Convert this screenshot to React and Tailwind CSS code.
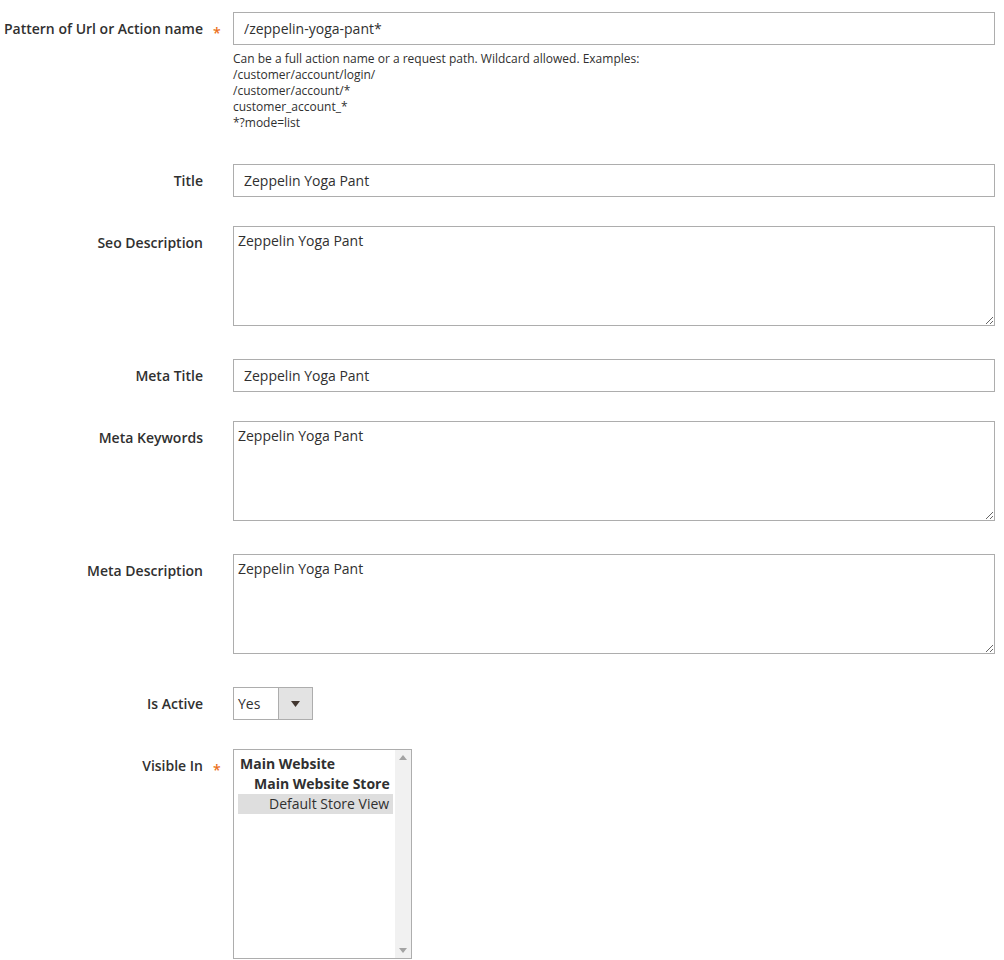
import React from "react";

const Star = () => (
  <span className="pl-[10px] text-[#eb6f1a] text-[14px] leading-[20px] font-semibold">*</span>
);

const Row = ({ label, required, className, children }) => (
  <div className={`flex ${className}`}>
    <div className="w-[203px] shrink-0 text-right pt-[7px] text-[14px] leading-[20px] font-semibold text-[#303030]">
      {label}
    </div>
    <div className="w-[30px] shrink-0 pt-[8px]">{required && <Star />}</div>
    <div className="flex-1">{children}</div>
  </div>
);

const inputCls =
  "block w-full h-[33px] border border-[#adadad] bg-white px-[10px] text-[14px] text-[#303030] outline-none";

const areaCls =
  "block w-full h-[100px] border border-[#adadad] bg-white px-[4px] pt-[4px] text-[14px] leading-[20px] text-[#303030] outline-none";

const App = () => {
  return (
    <div className="bg-white min-h-[960px] pt-[12px] pr-[9px] font-['Open_Sans',sans-serif] text-[#303030]">

      {/* PATTERN */}
      <Row label="Pattern of Url or Action name" required>
        <input className={inputCls} defaultValue="/zeppelin-yoga-pant*" />
        <div className="mt-[6px] text-[12px] leading-[16px]">
          <div>Can be a full action name or a request path. Wildcard allowed. Examples:</div>
          <div>/customer/account/login/</div>
          <div>/customer/account/*</div>
          <div>customer_account_*</div>
          <div>*?mode=list</div>
        </div>
      </Row>

      <Row label="Title" className="mt-[33px]">
        <input className={inputCls} defaultValue="Zeppelin Yoga Pant" />
      </Row>

      <Row label="Seo Description" className="mt-[29px]">
        <textarea className={areaCls} defaultValue="Zeppelin Yoga Pant" />
      </Row>

      <Row label="Meta Title" className="mt-[33px]">
        <input className={inputCls} defaultValue="Zeppelin Yoga Pant" />
      </Row>

      <Row label="Meta Keywords" className="mt-[29px]">
        <textarea className={areaCls} defaultValue="Zeppelin Yoga Pant" />
      </Row>

      <Row label="Meta Description" className="mt-[33px]">
        <textarea className={areaCls} defaultValue="Zeppelin Yoga Pant" />
      </Row>

      {/* SELECT */}
      <Row label="Is Active" className="mt-[33px]">
        <div className="flex w-[80px] h-[33px] border border-[#adadad] bg-white">
          <div className="flex-1 pl-[4px] text-[14px] leading-[31px]">Yes</div>
          <div className="w-[34px] border-l border-[#adadad] bg-[#e3e3e3] flex items-center justify-center">
            <svg width="9" height="6" viewBox="0 0 9 6">
              <path d="M0 0 H9 L4.5 6 Z" fill="#41362f" />
            </svg>
          </div>
        </div>
      </Row>

      {/* MULTISELECT */}
      <Row label="Visible In" required className="mt-[29px]">
        <div className="flex w-[179px] h-[210px] border border-[#adadad] bg-white">
          <div className="flex-1 pt-[4px] pl-[4px] pr-[2px] text-[14px] leading-[20px]">
            <div className="pl-[2px] font-bold">Main Website</div>
            <div className="pl-[16px] font-bold">Main Website Store</div>
            <div className="pl-[31px] bg-[#dedede]">Default Store View</div>
          </div>
          <div className="w-[16px] bg-[#f1f1f1] flex flex-col justify-between items-center py-[5px]">
            <svg width="8" height="5" viewBox="0 0 8 5">
              <path d="M4 0 L8 5 H0 Z" fill="#a3a3a3" />
            </svg>
            <svg width="8" height="5" viewBox="0 0 8 5">
              <path d="M0 0 H8 L4 5 Z" fill="#a3a3a3" />
            </svg>
          </div>
        </div>
      </Row>

    </div>
  );
};

export default App;
